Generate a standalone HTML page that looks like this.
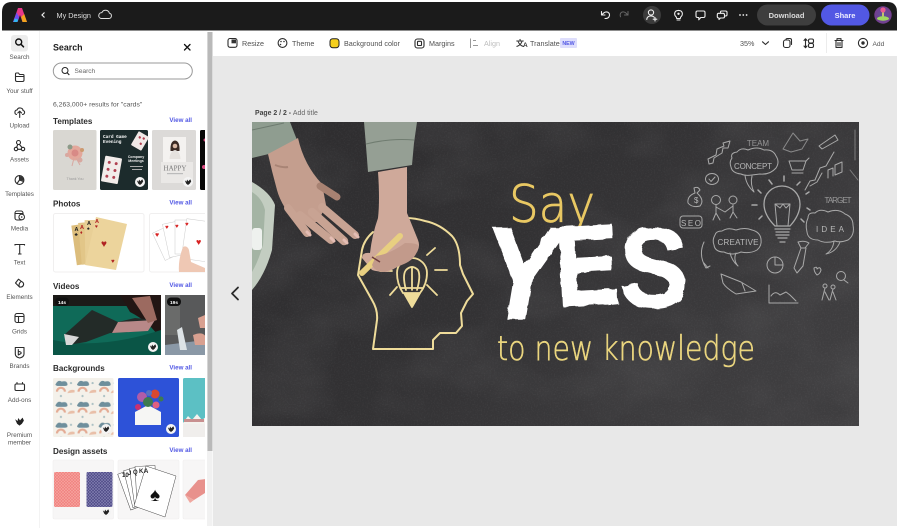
<!DOCTYPE html>
<html><head><meta charset="utf-8"><title>My Design</title>
<style>
html,body{margin:0;padding:0;background:#fff;width:900px;height:528px;overflow:hidden}
svg{display:block;filter:blur(.3px)}
text{font-family:"Liberation Sans",sans-serif}
.rl{font-size:6.3px;fill:#555;text-anchor:middle}
.ic{fill:none;stroke:#2c2c2c;stroke-width:1.1;stroke-linecap:round;stroke-linejoin:round}
.tb{font-size:7.2px;fill:#505050}
.h{font-size:8.1px;font-weight:bold;fill:#2c2c2c}
.va{font-size:6.2px;font-weight:bold;fill:#5258e4;text-anchor:end}
.w{fill:none;stroke:#eee;stroke-width:1.1;stroke-linecap:round;stroke-linejoin:round}
.ch{fill:none;stroke:#a9a9a9;stroke-width:1;stroke-linecap:round;stroke-linejoin:round}
.cht{fill:#b8b8b8;font-size:8px}
.y{fill:none;stroke:#efdc9a;stroke-width:1.8;stroke-linecap:round;stroke-linejoin:round}
</style></head><body>
<svg width="900" height="528" viewBox="0 0 900 528" xmlns="http://www.w3.org/2000/svg">
<defs>
<symbol id="crown" viewBox="0 0 10 10"><path d="M1 3 L3.300 4.500 L3.800 1.800 L5.500 4 L7.800 1.500 L9 4.200 L7.200 7 L5 8.800 L2.800 7 Z" fill="#222"/></symbol>
<filter id="noise" x="0" y="0" width="100%" height="100%"><feTurbulence type="fractalNoise" baseFrequency="0.7" numOctaves="3" seed="4"/><feColorMatrix values="0 0 0 0 1  0 0 0 0 1  0 0 0 0 1  0.9 0 0 0 -0.42"/></filter>
<filter id="cloud" x="0" y="0" width="100%" height="100%"><feTurbulence type="fractalNoise" baseFrequency="0.012 0.02" numOctaves="3" seed="9"/><feColorMatrix values="0 0 0 0 0.55  0 0 0 0 0.55  0 0 0 0 0.55  1.3 0 0 0 -0.52"/></filter>
<filter id="b1"><feGaussianBlur stdDeviation=".35"/></filter>
<filter id="rough" x="-5%" y="-5%" width="110%" height="110%"><feTurbulence type="fractalNoise" baseFrequency="0.09" numOctaves="2" seed="3"/><feDisplacementMap in="SourceGraphic" scale="4"/></filter>
<pattern id="pr" width="3" height="3" patternUnits="userSpaceOnUse"><rect width="3" height="3" fill="#f08080"/><path d="M0 0L3 3M3 0L0 3" stroke="#f7a8a0" stroke-width=".6"/></pattern>
<pattern id="pb" width="3" height="3" patternUnits="userSpaceOnUse"><rect width="3" height="3" fill="#4e4a86"/><path d="M0 0L3 3M3 0L0 3" stroke="#8582b4" stroke-width=".6"/></pattern>
<pattern id="rain" width="30" height="29" patternUnits="userSpaceOnUse" patternTransform="translate(53 378) scale(.72)"><rect width="30" height="29" fill="#f4f1ea"/><path d="M4 19 a7 7 0 0 1 14 0 h-3 a4 4 0 0 0 -8 0z" fill="#e4ab94"/><path d="M4 8 q3 -6 8 -3 q7 -2 8 3 q1 3 -3 3 h-11 q-4 -1 -2 -3z" fill="#6f8f9c"/><path d="M20 21 a7 6 0 0 1 10 -4 v3 z" fill="#e9bfa8"/><circle cx="25" cy="7" r="1.500" fill="#a9bfc2"/><circle cx="11" cy="25" r="1.500" fill="#a9bfc2"/></pattern>
<clipPath id="cp"><rect x="252" y="122" width="607" height="304"/></clipPath>
<clipPath id="pc"><rect x="40" y="125" width="165" height="400"/></clipPath>
<linearGradient id="board" x1="0" y1="0" x2="1" y2="0.5"><stop offset="0" stop-color="#2e2d2f"/><stop offset=".5" stop-color="#323133"/><stop offset="1" stop-color="#3e3d3f"/></linearGradient>
<radialGradient id="vg" cx=".5" cy=".5" r=".6"><stop offset="0" stop-color="#5b4f9c"/><stop offset="1" stop-color="#7a3a8c"/></radialGradient>
</defs>

<rect width="900" height="528" fill="#fff"/>
<rect x="213" y="56" width="684" height="470" fill="#e8e8e8"/>

<!-- top bar -->
<path d="M2 30.500V12Q2 2 12 2H887Q897 2 897 12V30.500Z" fill="#1b1b1b"/>
<path d="M18 8 H22 L27 22 H22.500 L20 15 L17.500 22 H13Z" fill="#e8388a"/>
<path d="M13 22 H17.500 L19.200 17 L16.600 12.500Z" fill="#6a50f0"/>
<path d="M22.500 22 H27 L24.200 14 L21.200 17Z" fill="#f2a41e"/>
<path d="M13.500 22 H17.300 L18.200 19.500 L14.800 18.500Z" fill="#30b8f0"/>
<path d="M44.500 12.500 L42 15 L44.500 17.500" fill="none" stroke="#eee" stroke-width="1.200"/>
<text x="56.500" y="18" font-size="7.300" fill="#ddd">My Design</text>
<path d="M101 18.500 h8 a2.700 2.700 0 0 0 .4-5.300 a4 4 0 0 0 -7.500 -.6 a3 3 0 0 0 -.9 5.900z" fill="none" stroke="#ddd" stroke-width="1"/>
<path d="M601.500 11.500 V15 H605 M602 14.700 Q605 10.800 608 12.300 Q610.500 14 609 16.800 Q608 18.500 605 18.500" class="w"/>
<path d="M628 11.500 V15 H624.500 M627.500 14.700 Q624.500 10.800 621.500 12.300 Q619.500 14 620.500 16.800" fill="none" stroke="#666" stroke-width="1" stroke-linecap="round"/>
<circle cx="652" cy="15" r="9" fill="#3b3b3b"/>
<circle cx="651" cy="12.500" r="2.600" class="w"/><path d="M646.800 19.500 Q647 16 651 16 Q653 16 654 17 M655 17.500v3.500M653.200 19.200h3.600" class="w"/>
<path d="M676.300 17 Q674.300 15.300 674.700 13 Q675.300 10.400 678.500 10.400 Q681.700 10.400 682.300 13 Q682.700 15.300 680.700 17 L680.300 18.500 H676.700Z M677 20h3" class="w"/><circle cx="678.500" cy="13.800" r="1.200" fill="#eee"/>
<path d="M697.500 11 H703.500 Q705 11 705 12.500 V16 Q705 17.500 703.500 17.500 H700.800 L698.800 19.800 V17.500 H697.500 Q696 17.500 696 16 V12.500 Q696 11 697.500 11Z" class="w"/>
<path d="M720.500 13 V12 Q720.500 11 721.700 11 H725.500 Q727 11 727 12.300 V14.800 Q727 16 725.500 16 H724.800 M718.500 13.300 H723 Q724.500 13.300 724.500 14.700 V16.800 Q724.500 18 723 18 H720.500 L719 19.500 V18 Q717.300 18 717.300 16.800 V14.700 Q717.300 13.300 718.500 13.300Z" class="w"/>
<circle cx="740" cy="15" r=".9" fill="#eee"/><circle cx="743.300" cy="15" r=".9" fill="#eee"/><circle cx="746.600" cy="15" r=".9" fill="#eee"/>
<rect x="757" y="4.500" width="59" height="21" rx="10.500" fill="#3e3e3e"/>
<text x="786.500" y="17.800" font-size="7.500" font-weight="bold" fill="#dcdcdc" text-anchor="middle">Download</text>
<rect x="821" y="4.500" width="48.500" height="21" rx="10.500" fill="#5258e4"/>
<text x="845" y="17.800" font-size="7.500" font-weight="bold" fill="#eef" text-anchor="middle">Share</text>
<circle cx="883" cy="15" r="8.700" fill="url(#vg)"/>
<path d="M883 9 v8" stroke="#d8e060" stroke-width="1.600"/><circle cx="883" cy="10" r="2.600" fill="#e85a90"/><ellipse cx="883" cy="18.500" rx="6" ry="2.200" fill="#a0d860"/>

<!-- toolbar -->
<rect x="213" y="31" width="684" height="25" fill="#fff"/>
<rect x="228" y="38.500" width="9" height="8.800" rx="2" class="ic"/>
<rect x="231.500" y="39.500" width="4.500" height="3.800" fill="#333"/>
<text x="242" y="46" class="tb">Resize</text>
<circle cx="282.500" cy="43" r="4.400" class="ic"/><circle cx="281" cy="41.500" r=".8" fill="#333"/><circle cx="284" cy="41.500" r=".8" fill="#333"/><circle cx="280.500" cy="44.500" r=".8" fill="#333"/>
<text x="292" y="46" class="tb">Theme</text>
<rect x="330" y="38.700" width="9" height="9" rx="2.700" fill="#f5cf1d" stroke="#222" stroke-width="1"/>
<text x="344" y="46" class="tb">Background color</text>
<rect x="415" y="39" width="9" height="9" rx="2.400" class="ic"/><rect x="417.500" y="41.300" width="4" height="4.200" rx=".8" class="ic"/>
<text x="429" y="46" class="tb">Margins</text>
<path d="M470.500 38.500 V48 M473 40.500h3 M473 45.500h5" fill="none" stroke="#999" stroke-width="1"/>
<text x="484" y="46" class="tb" style="fill:#bdbdbd">Align</text>
<text x="516" y="46" font-size="8" fill="#333" font-weight="bold" style="font-family:'Liberation Sans','Noto Sans CJK SC',sans-serif">文<tspan font-size="6.500" dx="-1" dy="1">A</tspan></text>
<text x="530" y="46" class="tb">Translate</text>
<rect x="560" y="38" width="17" height="10" rx="1" fill="#dedefc"/>
<text x="568.500" y="45.200" font-size="5.300" font-weight="bold" fill="#5258e4" text-anchor="middle">NEW</text>
<text x="740" y="46" class="tb">35%</text>
<path d="M762.500 41.800 L765.500 44.500 L768.500 41.800" class="ic"/>
<rect x="783.500" y="40" width="6.500" height="7.500" rx="2" class="ic"/><path d="M786 39.500 Q786 38.500 787.500 38.500 H789.800 Q791.500 38.500 791.500 40 V44.500" class="ic"/>
<path d="M805.500 39v8.500 M804 40.500 L805.500 38.800 L807 40.500 M804 46 L805.500 47.700 L807 46" class="ic"/><rect x="808.500" y="39" width="5" height="4" rx="1.500" class="ic"/><rect x="808.500" y="43.500" width="5" height="4" rx="1.500" class="ic"/>
<line x1="826.500" y1="33" x2="826.500" y2="53" stroke="#e8e8e8" stroke-width=".8"/>
<path d="M835 40.500 h8 M837 40 V38.700 H841 V40 M836 41 V47.500 H842 V41 M838 42.500v3.500M840 42.500v3.500" class="ic"/>
<circle cx="863" cy="43" r="4.600" class="ic"/><circle cx="863" cy="43" r="1.700" fill="#2c2c2c"/>
<text x="872.500" y="46" font-size="6.600" fill="#555">Add</text>

<!-- left rail -->
<rect x="2" y="31" width="37" height="497" fill="#fff"/>
<rect x="11" y="35" width="17" height="16.500" rx="3" fill="#ececec"/>
<circle cx="18.700" cy="42" r="3" fill="none" stroke="#111" stroke-width="1.400"/><path d="M21 44.300 L23.500 46.800" stroke="#111" stroke-width="1.500" stroke-linecap="round"/>
<text x="19.500" y="59" class="rl">Search</text>
<path d="M15.500 74 Q15.500 73 16.500 73 H18.500 L19.500 74.500 H23 Q24 74.500 24 75.500 V80 Q24 81.500 22.500 81.500 H17 Q15.500 81.500 15.500 80Z M15.500 76.500 H24" class="ic"/>
<text x="19.500" y="93" class="rl">Your stuff</text>
<path d="M16.500 114.500 Q14.500 114 15 111.500 Q15.500 110 17 110 Q18 107.500 20.500 108 Q23 108.500 23 110.500 Q25 111 24.500 113 Q24 114.500 22.500 114.500 M19.700 117.500 V111.500 M17.800 113 L19.700 111.200 L21.600 113" class="ic"/>
<text x="19.500" y="127.500" class="rl">Upload</text>
<circle cx="18.500" cy="142.500" r="2" class="ic"/><circle cx="16" cy="149" r="1.700" class="ic"/><circle cx="23" cy="149" r="1.700" class="ic"/><path d="M17.800 144.500 L16.500 147.500 M19.500 144.500 L22 147.500 M17.700 149.300h3.600" class="ic"/>
<text x="19.500" y="161.500" class="rl">Assets</text>
<circle cx="19.500" cy="180" r="4.400" class="ic"/><path d="M19.500 175.600 V180 L23.500 181.500 M19.500 180 L17 183.600" class="ic"/><path d="M19.500 176 A4.400 4.400 0 0 1 23.800 180.600 L19.500 180Z" fill="#333"/>
<text x="19.500" y="196" class="rl">Templates</text>
<rect x="15" y="211" width="8" height="9" rx="2" class="ic"/><path d="M15 213.500h8" class="ic"/><circle cx="21.700" cy="217" r="2.800" fill="#fff" stroke="#2c2c2c" stroke-width="1"/><circle cx="21.700" cy="217" r=".8" fill="#333"/>
<text x="19.500" y="230.500" class="rl">Media</text>
<path d="M15 245.500 V244.500 H24.500 V245.500 M19.700 244.500 V254 M18 254h3.500" fill="none" stroke="#2c2c2c" stroke-width="1.100"/>
<text x="19.500" y="264.500" class="rl">Text</text>
<path d="M15.500 283 L18.500 279.200 L21.500 281.500 Q24 282.500 23.500 285 Q22.500 287.500 19.500 287 Z M21 281.500 Q18 284 19.500 287" class="ic"/>
<text x="19.500" y="299" class="rl">Elements</text>
<rect x="15" y="313.500" width="9" height="9" rx="2" class="ic"/><path d="M15 316.500h9M18.500 316.500v6" class="ic"/>
<text x="19.500" y="333.500" class="rl">Grids</text>
<path d="M15.300 347.500 H24 V354 Q24 357 19.700 358 Q15.300 357 15.300 354Z" class="ic"/><path d="M18.300 349.500 V355 L21 353.500 Q21.800 352 19 351.500" class="ic"/>
<text x="19.500" y="368" class="rl">Brands</text>
<rect x="15" y="384" width="9.500" height="6.500" rx="1.200" class="ic"/><path d="M17 384 v-1.500 M22.500 384 v-1.500" class="ic"/>
<text x="19.500" y="402" class="rl">Add-ons</text>
<use href="#crown" x="14" y="416" width="11" height="11"/>
<text x="19.500" y="437" class="rl">Premium</text>
<text x="19.500" y="444.500" class="rl">member</text>
<line x1="39.500" y1="31" x2="39.500" y2="528" stroke="#f0f0f0" stroke-width=".8"/>

<!-- panel -->
<text x="53" y="50.500" font-size="8.900" font-weight="bold" fill="#222">Search</text>
<path d="M184.500 44.500 L190 50 M190 44.500 L184.500 50" stroke="#111" stroke-width="1.300" stroke-linecap="round"/>
<rect x="53.300" y="63" width="139" height="16" rx="8" fill="#fff" stroke="#999" stroke-width="1"/>
<circle cx="65" cy="70.500" r="3" fill="none" stroke="#222" stroke-width="1"/><path d="M67.200 72.800 L69.300 75" stroke="#222" stroke-width="1.100"/>
<text x="74.500" y="73" font-size="6.500" fill="#666">Search</text>
<text x="53" y="106.500" font-size="6.800" fill="#555">6,263,000+ results for "cards"</text>

<text x="53" y="124" class="h">Templates</text><text x="192" y="122" class="va">View all</text>
<text x="53" y="206.500" class="h">Photos</text><text x="192" y="204.500" class="va">View all</text>
<text x="53" y="289" class="h">Videos</text><text x="192" y="287" class="va">View all</text>
<text x="53" y="371" class="h">Backgrounds</text><text x="192" y="369.500" class="va">View all</text>
<text x="53" y="454" class="h">Design assets</text><text x="192" y="452" class="va">View all</text>

<g clip-path="url(#pc)">
<rect x="53" y="130" width="43.500" height="60" rx="1.500" fill="#d9d7d2"/>
<g filter="url(#b1)"><circle cx="75" cy="153" r="7.500" fill="#e3a79b"/><circle cx="70" cy="147" r="2.500" fill="#8c9a88"/><circle cx="80" cy="160" r="2.500" fill="#d8a8a0"/><circle cx="67" cy="155" r="2" fill="#d8a8a0"/><circle cx="82" cy="150" r="2" fill="#cc9a70"/><circle cx="75" cy="153" r="3.500" fill="#d88a86"/><path d="M74 158 L72 166 M76 158 L80 165" stroke="#d8a8a0"/></g>
<text x="75" y="180" font-size="3.600" fill="#999" text-anchor="middle">Thank You</text>

<rect x="100" y="130" width="48" height="60" rx="1.500" fill="#1c2b2c"/>
<text x="103" y="138" font-size="4.400" font-weight="bold" fill="#fff" style="font-family:'Liberation Mono',monospace">Card Game</text>
<text x="103" y="143" font-size="4.400" font-weight="bold" fill="#fff" style="font-family:'Liberation Mono',monospace">Evening</text>
<g transform="rotate(30 140 141)"><rect x="134" y="133" width="12" height="16" rx="1" fill="#f0e8e6"/><circle cx="138" cy="138" r="1.200" fill="#b04050"/><circle cx="142" cy="143" r="1.200" fill="#b04050"/><circle cx="142" cy="137" r="1.200" fill="#b04050"/></g>
<g transform="rotate(10 112 170)"><rect x="103" y="157" width="17" height="26" rx="1" fill="#f2ecea"/><circle cx="108" cy="163" r="1.500" fill="#b04050"/><circle cx="115" cy="163" r="1.500" fill="#b04050"/><circle cx="108" cy="170" r="1.500" fill="#b04050"/><circle cx="115" cy="170" r="1.500" fill="#b04050"/><circle cx="108" cy="177" r="1.500" fill="#b04050"/><circle cx="115" cy="177" r="1.500" fill="#b04050"/></g>
<text x="136" y="158" font-size="3.600" font-weight="bold" fill="#eee" text-anchor="middle">Company</text>
<text x="136" y="162" font-size="3.600" font-weight="bold" fill="#eee" text-anchor="middle">Meetings</text>
<rect x="130" y="166" width="13" height="1" fill="#aaa"/><rect x="132" y="169" width="10" height="1" fill="#aaa"/>

<rect x="152" y="130" width="44" height="60" rx="1.500" fill="#dcdad8"/>
<rect x="163" y="137" width="23" height="25" fill="#f4f2f0"/>
<path d="M170.500 151 Q170 141 175 140.500 Q180 141 179.500 151 Z" fill="#3a2a24"/><circle cx="175" cy="146" r="2.300" fill="#d8b8a4"/><path d="M169.500 159 Q170 151 175 150 Q180 151 180.500 159Z" fill="#e6e2de"/>
<rect x="161" y="162" width="32" height="21" fill="#eae8e6"/>
<text x="175" y="170.500" font-size="7" fill="#777" text-anchor="middle" style="font-family:'Liberation Serif',serif">HAPPY</text>
<rect x="167" y="173" width="16" height="1.200" fill="#bbb"/>

<rect x="200" y="130" width="10" height="60" rx="1.500" fill="#080808"/>
<circle cx="205" cy="140" r="1.500" fill="#d84a80"/><circle cx="204" cy="167" r="2" fill="#d84a80"/>

<rect x="53.500" y="213.500" width="90.500" height="58.500" rx="2" fill="#fff" stroke="#f0efef"/>
<rect x="149.500" y="213.500" width="60" height="58.500" rx="2" fill="#fff" stroke="#f0efef"/>
<g filter="url(#b1)">
<rect x="74" y="224" width="20" height="40" fill="#dcbd7c" transform="rotate(-8 84 244)"/>
<rect x="80" y="222" width="22" height="42" fill="#e2c688" transform="rotate(-5 90 244)"/>
<rect x="85" y="220" width="22" height="44" fill="#e8cf96" transform="rotate(-1 95 244)"/>
<path d="M96 217 L127 224 L116 270 L85 265Z" fill="#ecd49c"/>
<text x="74.500" y="231" font-size="5.500" font-weight="bold" fill="#222">A</text><text x="74.500" y="236" font-size="5" fill="#222">♣</text>
<text x="80" y="229" font-size="5.500" font-weight="bold" fill="#b02020">A</text><text x="80" y="234" font-size="5" fill="#b02020">♦</text>
<text x="87" y="225" font-size="5.500" font-weight="bold" fill="#222">A</text><text x="87" y="230" font-size="5" fill="#222">♠</text>
<text x="95" y="223" font-size="5.500" font-weight="bold" fill="#b02020">A</text><text x="95" y="228" font-size="5" fill="#b02020">♥</text>
<text x="101" y="247" font-size="10" fill="#b02020">♥</text>
<text x="111" y="263" font-size="6" fill="#b02020">♥</text>
</g>
<g filter="url(#b1)">
<rect x="158" y="228" width="18" height="30" fill="#fff" stroke="#ccc" stroke-width=".5" transform="rotate(-25 167 243)"/>
<rect x="166" y="222" width="18" height="34" fill="#fff" stroke="#ccc" stroke-width=".5" transform="rotate(-12 175 240)"/>
<rect x="175" y="220" width="18" height="34" fill="#fff" stroke="#ccc" stroke-width=".5"/>
<rect x="184" y="220" width="24" height="40" fill="#fff" stroke="#ccc" stroke-width=".5" transform="rotate(8 195 240)"/>
<text x="155" y="237" font-size="7" fill="#d82020">♥</text><text x="165" y="229" font-size="6" fill="#d82020">♥</text><text x="175" y="228" font-size="6" fill="#d82020">♥</text><text x="185" y="226" font-size="6" fill="#d82020">♥</text>
<text x="196" y="245" font-size="9" fill="#d82020">♥</text>
<path d="M179 272 Q178 260 183 247 Q187 245 189 250 L191 262 L205 268 V272Z" fill="#efc8b4"/>
</g>

<rect x="53" y="295" width="108" height="60" rx="2" fill="#0f6a58"/>
<rect x="53" y="295" width="108" height="11" fill="#1c1a18"/>
<path d="M120 295 H161 V340 Q150 322 130 312Z" fill="#221614"/>
<path d="M53 340 Q100 350 161 330 V355 H53Z" fill="#0a5546"/>
<path d="M64 335 L92 310 L118 322 L135 318 L155 320 L148 331 L110 333 L86 342 L68 345Z" fill="#232b28"/>
<path d="M118 322 L155 320 L148 331 L112 333Z" fill="#b88888"/>
<path d="M64 334 L79 337 L72 345 L66 345Z" fill="#d8d8d8"/>
<path d="M132 298 L150 296 L157 320 L148 323 L140 310Z" fill="#9c6a60"/>
<rect x="55" y="297.500" width="14" height="8.500" rx="4" fill="#111"/>
<text x="62" y="303.800" font-size="4.800" fill="#fff" font-weight="bold" text-anchor="middle">14s</text>
<rect x="165" y="295" width="50" height="60" rx="2" fill="#58595a"/>
<rect x="165" y="295" width="15" height="40" fill="#6a6b6a"/>
<path d="M165 345 L205 340 V355 H165Z" fill="#8a98a6"/>
<path d="M177 330 L182 327 L187 350 L180 350Z" fill="#dde3e6"/>
<path d="M193 335 Q205 330 207 340 L205 345 L195 345Z" fill="#d8a090"/><path d="M198 318 L205 315 V328 L200 328Z" fill="#d8a090"/>
<rect x="167" y="297.500" width="14" height="8.500" rx="4" fill="#111"/>
<text x="174" y="303.800" font-size="4.800" fill="#fff" font-weight="bold" text-anchor="middle">19s</text>

<rect x="53" y="378" width="60.500" height="59" rx="1.500" fill="url(#rain)"/>
<rect x="118" y="378" width="61" height="59" rx="1.500" fill="#2d52d8"/>
<path d="M135 412 L148 405 L161 412 V425 H135Z" fill="#f6f6f4"/>
<circle cx="142" cy="397" r="5" fill="#b05ca8"/><circle cx="155" cy="394" r="4.500" fill="#d84830"/><circle cx="148" cy="402" r="5" fill="#3e7a50"/><circle cx="156" cy="405" r="3.500" fill="#e06080"/><circle cx="138" cy="407" r="3" fill="#c83070"/><circle cx="149" cy="393" r="3" fill="#5870c0"/><circle cx="161" cy="399" r="2.500" fill="#3e7a50"/>
<rect x="183" y="378" width="30" height="59" rx="1.500" fill="#5cc0c4"/>
<rect x="183" y="423" width="30" height="14" fill="#f0eeec"/><path d="M183 423 L188 416 L192 420 L197 414 L202 420 L207 416 V424 H183Z" fill="#f4f2ee"/><rect x="184" y="419" width="20" height="3" fill="#c89090"/>

<rect x="53" y="460" width="60.500" height="59" rx="1.500" fill="#f7f6f6" stroke="#f0eeee" stroke-width=".6"/>
<rect x="118" y="460" width="61" height="59" rx="1.500" fill="#f7f6f6" stroke="#f0eeee" stroke-width=".6"/>
<rect x="183" y="460" width="30" height="59" rx="1.500" fill="#f7f6f6" stroke="#f0eeee" stroke-width=".6"/>
<rect x="54" y="472" width="26" height="35" rx="1.500" fill="url(#pr)"/>
<rect x="86.500" y="472" width="26" height="35" rx="1.500" fill="url(#pb)"/>
<g fill="#fff" stroke="#444" stroke-width=".5">
<rect x="124" y="470" width="18" height="38" transform="rotate(-20 133 490)"/>
<rect x="128" y="468" width="18" height="38" transform="rotate(-14 137 487)"/>
<rect x="132" y="467" width="18" height="38" transform="rotate(-8 141 486)"/>
<rect x="136" y="466" width="20" height="38" transform="rotate(-3 146 485)"/>
<path d="M146 466 L176 476 L165 517 L134 506Z"/>
</g>
<text x="122" y="477" font-size="6" font-weight="bold" fill="#222">10</text><text x="128" y="475" font-size="6" font-weight="bold" fill="#222">J</text><text x="133" y="474" font-size="6" font-weight="bold" fill="#222">Q</text><text x="139" y="473" font-size="6" font-weight="bold" fill="#222">K</text><text x="144" y="473" font-size="6" font-weight="bold" fill="#222">A</text>
<text x="155" y="501" font-size="19" fill="#111" text-anchor="middle">♠</text>
<path d="M185 495 L198 480 L213 478 V488 L194 500Z" fill="#e8918c"/><path d="M185 495 L194 500 L190 503Z" fill="#f0a8a0"/>

<circle cx="140" cy="182" r="5" fill="#f4f4f4"/><use href="#crown" x="136" y="178" width="8" height="8"/>
<circle cx="188" cy="182" r="5" fill="#f4f4f4"/><use href="#crown" x="184" y="178" width="8" height="8"/>
<circle cx="153" cy="347" r="5" fill="#f4f4f4"/><use href="#crown" x="149" y="343" width="8" height="8"/>
<circle cx="106" cy="429" r="5" fill="#f4f4f4"/><use href="#crown" x="102" y="425" width="8" height="8"/>
<circle cx="171" cy="429" r="5" fill="#f4f4f4"/><use href="#crown" x="167" y="425" width="8" height="8"/>
<circle cx="106" cy="512" r="5" fill="#f4f4f4"/><use href="#crown" x="102" y="508" width="8" height="8"/>
</g>
<rect x="205" y="31" width="8" height="497" fill="#fff"/>
<rect x="207" y="32" width="5.500" height="494" fill="#f1f1f1"/>
<rect x="207.500" y="32" width="5" height="419" fill="#b9b9b9"/>

<!-- canvas contents -->
<text x="255" y="115" font-size="6.900" font-weight="bold" fill="#444">Page 2 / 2 - <tspan font-weight="normal" fill="#666">Add title</tspan></text>
<path d="M238 287.500 L232 293.500 L238 299.500" fill="none" stroke="#2a2a2a" stroke-width="1.800" stroke-linecap="round" stroke-linejoin="round"/>

<g clip-path="url(#cp)">
<rect x="252" y="122" width="607" height="304" fill="url(#board)"/>
<rect x="252" y="122" width="607" height="304" filter="url(#cloud)" opacity=".12"/>
<rect x="252" y="122" width="607" height="304" filter="url(#noise)" opacity=".13"/>

<g filter="url(#b1)">
<path d="M252 182 Q270 192 275 205 L272 250 Q265 275 252 290Z" fill="#c3cdc1"/>
<path d="M252 192 Q262 198 265 210 L263 245 Q258 262 252 272Z" fill="#a4b4a4"/>
<rect x="252" y="228" width="10" height="22" rx="3" fill="#eef1ee"/>
<path d="M252 122 H290 L297 140 L273 153 L252 158Z" fill="#8f9d90"/>
<path d="M252 130 L284 123" stroke="#6e7b70" stroke-width="1"/>
<!-- left hand -->
<path d="M268 154 L298 138 Q304 165 322 184 L326 205 L318 222 L296 222 L285 208 Q279 198 277 190 Q272 172 268 154Z" fill="#c49e8e"/>
<g fill="none" stroke-linecap="round" stroke="#c8a393">
<path d="M320 186 L337 197" stroke-width="7" stroke="#a88272"/>
<path d="M322 207 L355 235" stroke-width="8"/>
<path d="M312 212 L344 241" stroke-width="8.500"/>
<path d="M300 215 L331 240" stroke-width="8"/>
<path d="M288 208 L307 233" stroke-width="8"/>
</g>
<path d="M358 237 l-3 -3 M347 243 l-3 -3 M334 241 l-3 -3 M310 235 l-3 -3" stroke="#e4bdb4" stroke-width="3" stroke-linecap="round"/>
<path d="M275 165 Q283 168 288 167" stroke="#8c6a5c" stroke-width="2" fill="none" opacity=".5"/>
<path d="M364 122 H417 L414 143 L412 165 L368 172 Q366 145 364 122Z" fill="#959f94"/>
<path d="M366 144 Q390 138 414 140" stroke="#6f7c70" stroke-width="1" fill="none"/>
<!-- head -->
<path class="y" style="stroke-width:2" d="M373 232 Q364 240 362 250 L358 275 L372 300 Q378 310 377 320 L373 349 H433 V340 L440 333 H456 L462 326 L461 313 L467 301 L473 294 L463 274 L460 265 Q460 245 452 236 Q440 224 425 221 Q415 218 406 218"/>
<g class="y"><path d="M403 293 Q397 284 397 273 A15 15 0 0 1 427 273 Q427 284 420 293"/><path d="M404 293 L412 307 L420 293Z" fill="#efdc9a"/><path d="M406 290 Q402 275 406 270 Q412 264 418 270 Q421 276 417 290 M412 268 V290"/><path d="M401 288 H423"/><path d="M427 255 L435 248 M435 270 H447 M380 271 H392 M390 295 L397 287 M437 295 L427 285"/></g>
<!-- right hand -->
<path d="M378 172 L407 167 L407 213 Q412 225 418 240 Q422 250 410 260 L388 272 Q378 272 372 270 L362 258 Q362 252 370 253 Q372 235 378 218 Q380 200 378 172Z" fill="#cfa99a"/>
<path d="M400 236 L362 273" stroke="#e8cf80" stroke-width="6" stroke-linecap="round"/>
<path d="M376 256 Q390 254 405 243 Q415 243 418 245 Q418 258 404 264 L385 272 Q375 272 372 265Z" fill="#c29a8b"/>
<path d="M372 257 L380 262" stroke="#6e3e3e" stroke-width="1.500"/>
</g>

<!-- lettering -->
<g text-anchor="middle">
<text x="552" y="222" font-size="52" fill="#e9c863" stroke="#e9c863" stroke-width=".7" textLength="86" lengthAdjust="spacingAndGlyphs" style="font-family:'DejaVu Sans',sans-serif;font-weight:200">Say</text>
<g fill="#fff" stroke="#fff" filter="url(#rough)" style="font-family:'Liberation Sans',sans-serif;font-weight:bold">
<text transform="translate(522 318) scale(1.120 1.300)" font-size="100" stroke-width="2" style="font-style:italic">Y</text>
<text transform="translate(589 304) rotate(-3) scale(.96 1.130)" font-size="100" stroke-width="2">E</text>
<text transform="translate(654 307) scale(1.030 1.130)" font-size="100" stroke-width="1.500">S</text>
</g>
<text x="626" y="360" font-size="34" fill="#ebd67f" stroke="#ebd67f" stroke-width=".5" textLength="258" lengthAdjust="spacingAndGlyphs" style="font-family:'DejaVu Sans',sans-serif;font-weight:200">to new knowledge</text>
</g>

<!-- doodles -->
<g filter="url(#b1)">
<path class="ch" d="M732 158 Q730 153 737 152 Q741 147 748 150 Q757 146 764 150 Q773 149 776 156 Q780 162 776 168 Q770 175 760 174 L752 175 Q745 176 741 174 Q732 173 731 167 Q729 162 732 158Z"/>
<path class="ch" d="M745 175 Q746 185 754 192 Q750 184 752 176"/>
<text x="753" y="169" class="cht" font-size="8" text-anchor="middle" textLength="38">CONCEPT</text>
<text x="758" y="146" class="cht" font-size="6.500" text-anchor="middle" opacity=".7">TEAM</text>
<text x="838" y="203" class="cht" font-size="8" text-anchor="middle" opacity=".75" textLength="27">TARGET</text>
<path class="ch" style="stroke-width:1.300" d="M775 226 Q764 215 764 204 A18 18 0 0 1 800 204 Q800 215 790 226Z"/>
<path class="ch" d="M777 226 L775 204 H790 L788 226 M775 204 L780 208 L783 204 L786 208 L790 204"/>
<path class="ch" style="stroke-width:1.300" d="M775 229 H790 M776 232 H789 M776 235 H789 M778 238 H787 M780 242 H785"/>
<path class="ch" style="stroke-width:1.500" d="M752 205 H757 M758 190 L761 193 M769 180 L772 184 M784 176 V181 M797 185 L800 182 M806 194 L809 192 M807 208 L810 210 M801 219 L804 222 M759 219 L762 216"/>
<path class="ch" d="M808 218 Q808 212 815 213 Q820 208 828 212 Q838 208 845 214 Q853 217 853 225 Q855 235 848 240 Q840 243 835 241 Q825 244 818 240 Q808 240 807 232 Q805 224 808 218Z"/>
<path class="ch" d="M834 241 Q833 250 826 254 Q836 252 840 242"/>
<text x="830" y="232" class="cht" font-size="12" text-anchor="middle" textLength="28">IDEA</text>
<path class="ch" d="M715 235 Q716 231 722 231 Q728 227 736 230 Q745 227 752 230 Q760 232 761 239 Q762 246 757 250 Q750 254 741 252 Q732 256 724 252 Q715 252 714 245 Q712 240 715 235Z"/>
<path class="ch" d="M730 253 Q732 261 738 266 Q733 260 736 253"/>
<text x="738" y="245" class="cht" font-size="7.500" text-anchor="middle" textLength="41">CREATIVE</text>
<rect x="680" y="216" width="22" height="12" rx="3" class="ch"/>
<text x="691" y="226" class="cht" font-size="9" text-anchor="middle" textLength="20">SEO</text>
<ellipse cx="712" cy="179" rx="6.500" ry="5.500" class="ch"/><path class="ch" d="M709 179 L711 181.500 L715 177"/>
<path class="ch" d="M709 164 L708 159 L716 155 L717 149 L724 146 L723 143 L730 141 L728 148 L723 148 L722 153 L714 158 L713 163Z"/>
<path class="ch" d="M694 188 Q698 186 700 190 L697 193 Q705 200 700 206 Q692 208 688 203 Q687 196 695 193Z"/><text x="694" y="203" class="cht" font-size="6">$</text>
<circle cx="716" cy="200" r="4.500" class="ch"/><circle cx="733" cy="200" r="4" class="ch"/><path class="ch" d="M716 205 V213 L713 220 M716 213 L720 220 M716 207 L725 212 L733 206 M733 205 V212 L730 218 M733 212 L737 218"/>
<path class="ch" d="M789 161 H806 L803 170 H792 Z M792 173 H803 M806 161 L809 158"/>
<path class="ch" d="M805 190 L810 181 L815 180 L820 168 L826 166 L834 152 M810 186 L817 182 L822 173 M828 178 V170 L833 168 V176 M835 175 V165 L842 162 V172Z"/>
<path class="ch" d="M819 146 L835 135 L838 140 L822 149Z"/>
<path class="ch" opacity=".7" d="M783 149 L793 133 L800 141 L808 139 L802 149 L791 152Z"/>
<path class="ch" d="M798 242 Q804 240 809 243 L805 248 H801Z M801 248 L794 268 L797 273 L803 266 L806 248"/>
<circle cx="775" cy="265" r="8" class="ch"/><path class="ch" d="M775 257 V265 L783 265"/>
<path class="ch" d="M814 268 Q817 266 817 269 Q820 266 821 270 Q820 274 817 275 Q814 272 814 268Z"/>
<circle cx="841" cy="276" r="4.500" class="ch"/><path class="ch" d="M844 280 L848 283"/>
<path class="ch" d="M721 274 L741 282 L756 291 L736 294 Q726 288 723 283Z M742 283 L745 291"/>
<path class="ch" d="M704 242 Q698 255 706 268 L710 266 M704 263 L708 268"/>
<path class="ch" d="M769 285 V303 H798 M771 296 Q775 290 780 295 L786 292 L790 295 L796 301"/>
<circle cx="825" cy="286" r="2" class="ch"/><circle cx="833" cy="287" r="2" class="ch"/><path class="ch" d="M825 288 L822 300 M825 292 L829 300 M833 289 L830 300 M833 292 L836 300"/>
<path class="ch" opacity=".6" d="M855 130 V160 M850 170 L858 180"/>
</g>
</g>
</svg>
</body></html>
